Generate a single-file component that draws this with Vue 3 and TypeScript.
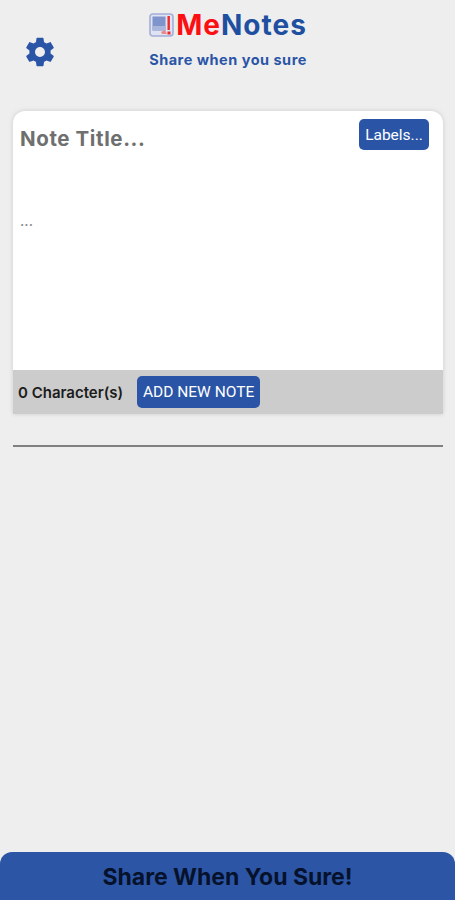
<script setup lang="ts">
const title = 'Note Title...'
</script>

<template>
  <div class="page">
    <header class="header">
      <button class="gear" aria-label="Settings">
        <svg viewBox="0 0 24 24" width="34" height="34">
          <path fill="#2a55a6" d="M19.43 12.98c.04-.32.07-.64.07-.98s-.03-.66-.07-.98l2.11-1.65c.19-.15.24-.42.12-.64l-2-3.46c-.12-.22-.39-.3-.61-.22l-2.49 1c-.52-.4-1.08-.73-1.69-.98l-.38-2.65C14.46 2.18 14.25 2 14 2h-4c-.25 0-.46.18-.49.42l-.38 2.65c-.61.25-1.17.59-1.69.98l-2.49-1c-.23-.09-.49 0-.61.22l-2 3.46c-.13.22-.07.49.12.64l2.11 1.65c-.04.32-.07.65-.07.98s.03.66.07.98l-2.11 1.65c-.19.15-.24.42-.12.64l2 3.46c.12.22.39.3.61.22l2.49-1c.52.4 1.08.73 1.69.98l.38 2.65c.03.24.24.42.49.42h4c.25 0 .46-.18.49-.42l.38-2.65c.61-.25 1.17-.59 1.69-.98l2.49 1c.23.09.49 0 .61-.22l2-3.46c.12-.22.07-.49-.12-.64l-2.11-1.65zM12 15.5c-1.93 0-3.5-1.57-3.5-3.5s1.57-3.5 3.5-3.5 3.5 1.57 3.5 3.5-1.57 3.5-3.5 3.5z"/>
        </svg>
      </button>
      <div class="brand">
        <div class="logo-row">
          <svg class="logo" viewBox="0 0 25 24" width="25" height="24">
            <rect x="1" y="1" width="23" height="22" rx="3" fill="#dfe3f2" stroke="#a3afd8" stroke-width="1.6"/>
            <rect x="3.5" y="3.5" width="13" height="14" fill="#7f93cc"/>
            <rect x="3.5" y="13" width="13" height="4.5" fill="#aab6dc"/>
            <rect x="18.5" y="3" width="2.4" height="14" fill="#ee2a2a"/>
            <rect x="18.5" y="18.5" width="3" height="3" fill="#ee2a2a"/>
            <path d="M12 19l4-2 2 4h-5z" fill="#e98a8a"/>
          </svg>
          <span class="name"><span class="me">Me</span><span class="notes">Notes</span></span>
        </div>
        <div class="tag">Share when you sure</div>
      </div>
    </header>

    <section class="card">
      <div class="card-body">
        <div class="title-row">
          <span class="title">{{ title }}</span>
          <button class="btn labels">Labels...</button>
        </div>
        <div class="dots">...</div>
      </div>
      <div class="card-foot">
        <span class="count">0 Character(s)</span>
        <button class="btn add">ADD NEW NOTE</button>
      </div>
    </section>

    <hr class="rule" />

    <footer class="share">Share When You Sure!</footer>
  </div>
</template>

<style scoped>
.page {
  height: 900px;
  background: #eeeeee;
  display: flex;
  flex-direction: column;
  font-family: Inter, "Liberation Sans", sans-serif;
  font-feature-settings: "calt" 0;
  overflow: hidden;
}
.header {
  height: 111px;
  flex: none;
  display: flex;
  align-items: flex-start;
}
.gear {
  margin: 35px 0 0 23px;
  padding: 0;
  width: 34px;
  height: 34px;
  flex: none;
  border: 0;
  background: none;
}
.gear svg {
  display: block;
}
.brand {
  margin-left: 91px;
  padding-top: 11px;
  display: flex;
  flex-direction: column;
  align-items: center;
  width: 160px;
}
.logo-row {
  display: flex;
  align-items: center;
  gap: 2px;
  height: 28px;
}
.logo {
  flex: none;
}
.name {
  font-size: 28px;
  line-height: 28px;
  font-weight: 700;
  letter-spacing: 1px;
  white-space: nowrap;
}
.me {
  color: #fb0f13;
}
.notes {
  color: #1f4fa0;
}
.tag {
  margin-top: 12px;
  font-size: 14.5px;
  line-height: 18px;
  font-weight: 700;
  letter-spacing: 0.5px;
  color: #2a55a6;
  white-space: nowrap;
}
.card {
  margin: 0 12px 0 13px;
  border-radius: 12px 12px 0 0;
  background: #ffffff;
  box-shadow: 0 0 5px rgba(0, 0, 0, 0.14);
  overflow: hidden;
  flex: none;
}
.card-body {
  height: 259px;
  padding: 8px 14px 0 7px;
  box-sizing: border-box;
}
.title-row {
  display: flex;
  justify-content: space-between;
  align-items: flex-start;
}
.title {
  margin-top: 7px;
  font-size: 20.5px;
  line-height: 26px;
  font-weight: 700;
  letter-spacing: 0.6px;
  color: #6f6f6f;
}
.btn {
  border: 0;
  border-radius: 5px;
  background: #2a55a6;
  color: #ffffff;
  font-family: Roboto, "Liberation Sans", sans-serif;
  padding: 0;
}
.labels {
  width: 70px;
  height: 31px;
  font-size: 15.5px;
}
.dots {
  margin-top: 60px;
  font-size: 15px;
  line-height: 18px;
  color: #8a8a8a;
}
.card-foot {
  height: 44px;
  background: #cccccc;
  display: flex;
  align-items: center;
  padding-left: 5px;
  gap: 14px;
}
.count {
  font-size: 15px;
  font-weight: 600;
  color: #1c1c1c;
  white-space: nowrap;
}
.add {
  width: 123px;
  height: 32px;
  font-size: 15.5px;
  white-space: nowrap;
  margin-bottom: 1px;
}
.rule {
  margin: 31px 12px 0 13px;
  height: 2px;
  border: 0;
  background: #808080;
  flex: none;
}
.share {
  margin-top: auto;
  height: 48px;
  padding-top: 2px;
  box-sizing: border-box;
  flex: none;
  background: #2c56a5;
  border-radius: 12px 12px 0 0;
  display: flex;
  align-items: center;
  justify-content: center;
  font-size: 23px;
  font-weight: 700;
  color: #06122c;
}
</style>
